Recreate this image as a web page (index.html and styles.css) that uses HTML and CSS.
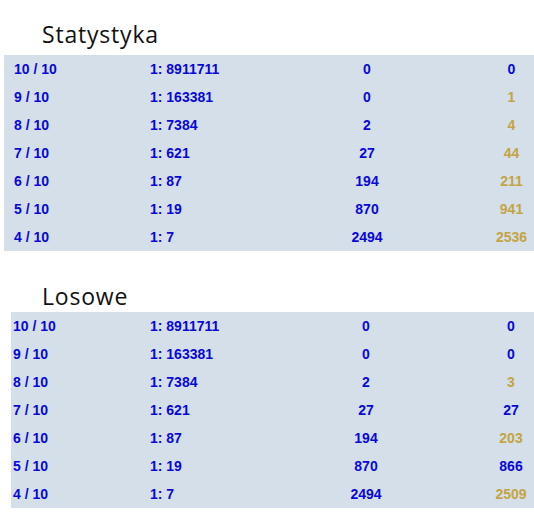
FILE: index.html
```html
<!DOCTYPE html>
<html lang="pl">
<head>
    <meta charset="UTF-8">
    <title>Statystyka</title>
    <link rel="stylesheet" href="styles.css">
</head>
<body>
    <h2 class="title">Statystyka</h2>
    <div class="stats">
        <div class="row"><span>10 / 10</span><span>1: 8911711</span><span class="mid">0</span><span class="last">0</span></div>
        <div class="row"><span>9 / 10</span><span>1: 163381</span><span class="mid">0</span><span class="last up">1</span></div>
        <div class="row"><span>8 / 10</span><span>1: 7384</span><span class="mid">2</span><span class="last up">4</span></div>
        <div class="row"><span>7 / 10</span><span>1: 621</span><span class="mid">27</span><span class="last up">44</span></div>
        <div class="row"><span>6 / 10</span><span>1: 87</span><span class="mid">194</span><span class="last up">211</span></div>
        <div class="row"><span>5 / 10</span><span>1: 19</span><span class="mid">870</span><span class="last up">941</span></div>
        <div class="row"><span>4 / 10</span><span>1: 7</span><span class="mid">2494</span><span class="last up">2536</span></div>
    </div>

    <h2 class="title title-random">Losowe</h2>
    <div class="stats stats-random">
        <div class="row"><span>10 / 10</span><span>1: 8911711</span><span class="mid">0</span><span class="last">0</span></div>
        <div class="row"><span>9 / 10</span><span>1: 163381</span><span class="mid">0</span><span class="last">0</span></div>
        <div class="row"><span>8 / 10</span><span>1: 7384</span><span class="mid">2</span><span class="last up">3</span></div>
        <div class="row"><span>7 / 10</span><span>1: 621</span><span class="mid">27</span><span class="last">27</span></div>
        <div class="row"><span>6 / 10</span><span>1: 87</span><span class="mid">194</span><span class="last up">203</span></div>
        <div class="row"><span>5 / 10</span><span>1: 19</span><span class="mid">870</span><span class="last">866</span></div>
        <div class="row"><span>4 / 10</span><span>1: 7</span><span class="mid">2494</span><span class="last up">2509</span></div>
    </div>
</body>
</html>
```

FILE: styles.css
```css
body {
    margin: 0;
    background-color: white;
    font-family: "Liberation Sans", Arial, sans-serif;
}
.title {
    font-family: "Open Sans", sans-serif;
    font-weight: normal;
    font-size: 23px;
    letter-spacing: 0.8px;
    line-height: 28px;
    color: #111;
    margin: 0 0 7px 42px;
    padding-top: 20px;
}
.title-random {
    margin-top: 11px;
    margin-bottom: 2px;
}
.stats {
    background-color: #d4dfe9;
    margin-left: 4px;
    padding-left: 10px;
}
.stats-random {
    margin-left: 11px;
    padding-left: 2px;
}
.row {
    display: grid;
    grid-template-columns: 136px 136px 162px 1fr;
    height: 28px;
    align-items: center;
    font-size: 14px;
    font-weight: bold;
    color: #0808d8;
}
.stats-random .row {
    grid-template-columns: 137px 136px 160px 1fr;
}
.mid {
    text-align: center;
}
.last {
    text-align: center;
    padding-left: 41px;
}
.stats-random .last {
    padding-left: 43px;
    padding-right: 1px;
}
.up {
    color: #c4a443;
}
```
